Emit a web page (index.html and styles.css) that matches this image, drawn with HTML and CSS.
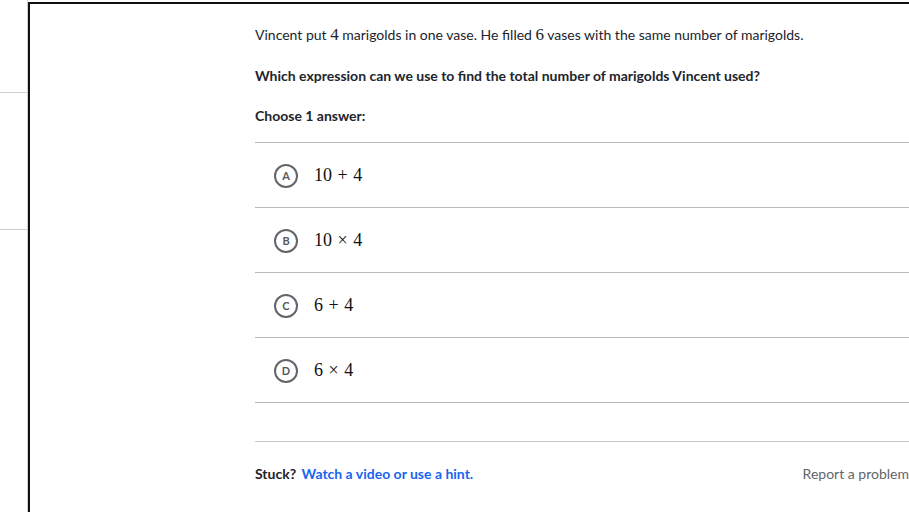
FILE: index.html
```html
<!DOCTYPE html>
<html>
<head>
<meta charset="utf-8">
<link rel="stylesheet" href="styles.css">
</head>
<body>
<div class="page">
  <div class="side">
    <div class="side-line first"></div>
    <div class="side-line second"></div>
  </div>
  <div class="frame">
    <div class="content">
      <p class="intro">Vincent put <span class="m">4</span> marigolds in one vase. He filled <span class="m">6</span> vases with the same number of marigolds.</p>
      <p class="question">Which expression can we use to find the total number of marigolds Vincent used?</p>
      <p class="choose">Choose 1 answer:</p>
      <ul class="choices">
        <li class="choice"><span class="letter">A</span><span class="expr">10 + 4</span></li>
        <li class="choice"><span class="letter">B</span><span class="expr">10 × 4</span></li>
        <li class="choice"><span class="letter">C</span><span class="expr">6 + 4</span></li>
        <li class="choice"><span class="letter">D</span><span class="expr">6 × 4</span></li>
      </ul>
      <div class="footer">
        <div class="stuck">Stuck? <a class="hint">Watch a video or use a hint.</a></div>
        <div class="report">Report a problem</div>
      </div>
    </div>
  </div>
</div>
</body>
</html>
```
FILE: styles.css
```css
html, body {
  margin: 0;
  padding: 0;
  background: #fff;
  overflow: hidden;
}
body {
  font-family: Lato, "Liberation Sans", sans-serif;
  color: #21242c;
  width: 909px;
  height: 512px;
}
.page {
  display: flex;
  height: 512px;
}
.side {
  width: 27px;
  border-right: 1px solid #cfcfcf;
  flex: none;
}
.side-line {
  height: 1px;
  background: #cfcfcf;
}
.side-line.first {
  margin-top: 92px;
}
.side-line.second {
  margin-top: 136px;
}
.frame {
  flex: 1;
  margin-top: 2px;
  border-top: 2px solid #111;
  border-left: 2px solid #111;
}
.content {
  padding-left: 225px;
  padding-top: 21px;
}
p {
  margin: 0;
  font-size: 14px;
  line-height: 20px;
}
.m {
  font-family: "Liberation Serif", serif;
  font-size: 17px;
}
.question {
  margin-top: 21px;
  font-weight: 700;
}
.choose {
  margin-top: 20px;
  font-weight: 700;
}
.choices {
  list-style: none;
  margin: 16px 0 0 0;
  padding: 0;
  border-top: 1px solid #b9b9b9;
}
.choice {
  height: 64px;
  border-bottom: 1px solid #b9b9b9;
  display: flex;
  align-items: center;
  padding-left: 19px;
}
.letter {
  box-sizing: border-box;
  width: 24px;
  height: 24px;
  border: 2px solid #626569;
  border-radius: 50%;
  display: flex;
  align-items: center;
  justify-content: center;
  font-size: 11px;
  font-weight: 700;
  color: #555a60;
  margin-top: 1px;
}
.expr {
  margin-left: 16px;
  font-family: "Liberation Serif", serif;
  font-size: 18px;
  color: #111;
  word-spacing: 1px;
}
.footer {
  margin-top: 38px;
  border-top: 1px solid #c8c8c8;
  display: flex;
  justify-content: space-between;
  padding-top: 22px;
  font-size: 14px;
  line-height: 20px;
}
.stuck {
  font-weight: 700;
}
.hint {
  color: #1865f2;
  margin-left: 2px;
}
.report {
  color: #626569;
}
```
